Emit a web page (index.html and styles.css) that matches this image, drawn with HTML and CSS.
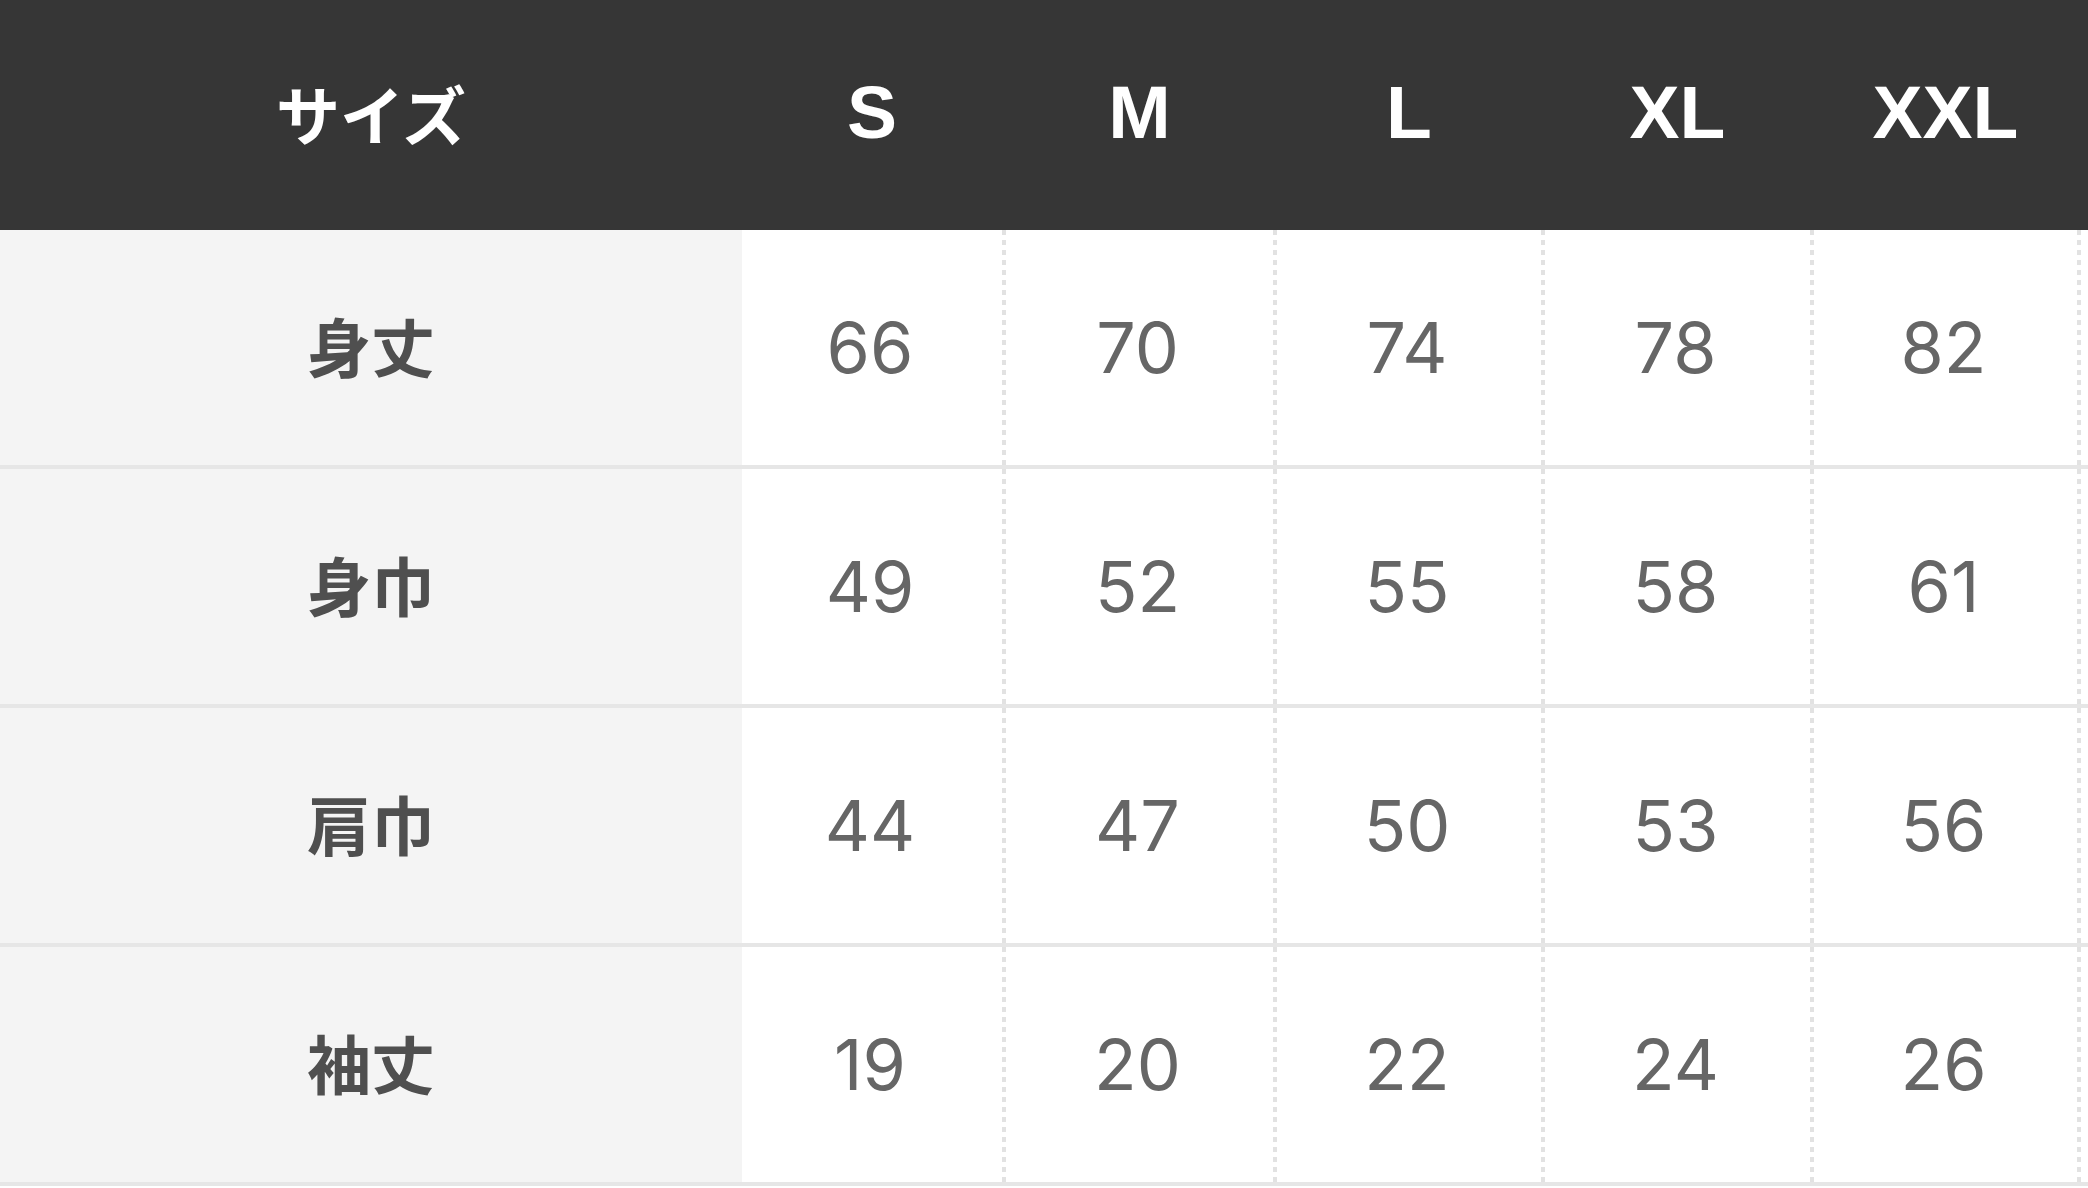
FILE: index.html
```html
<!DOCTYPE html>
<html lang="ja">
<head>
<meta charset="utf-8">
<title>サイズ表</title>
<link rel="stylesheet" href="styles.css">
</head>
<body>
<div class="size-table">
  <div class="row head">
    <div class="cell label">サイズ</div>
    <div class="cell size">S</div>
    <div class="cell size">M</div>
    <div class="cell size">L</div>
    <div class="cell size">XL</div>
    <div class="cell size">XXL</div>
    <div class="cell pad"></div>
  </div>
  <div class="row">
    <div class="cell label">身丈</div>
    <div class="cell num">66</div>
    <div class="cell num">70</div>
    <div class="cell num">74</div>
    <div class="cell num">78</div>
    <div class="cell num">82</div>
    <div class="cell pad"></div>
  </div>
  <div class="row">
    <div class="cell label">身巾</div>
    <div class="cell num">49</div>
    <div class="cell num">52</div>
    <div class="cell num">55</div>
    <div class="cell num">58</div>
    <div class="cell num">61</div>
    <div class="cell pad"></div>
  </div>
  <div class="row">
    <div class="cell label">肩巾</div>
    <div class="cell num">44</div>
    <div class="cell num">47</div>
    <div class="cell num">50</div>
    <div class="cell num">53</div>
    <div class="cell num">56</div>
    <div class="cell pad"></div>
  </div>
  <div class="row">
    <div class="cell label">袖丈</div>
    <div class="cell num">19</div>
    <div class="cell num">20</div>
    <div class="cell num">22</div>
    <div class="cell num">24</div>
    <div class="cell num">26</div>
    <div class="cell pad"></div>
  </div>
</div>
</body>
</html>
```

FILE: styles.css
```css
html, body {
  margin: 0;
  padding: 0;
  background: #ffffff;
}

body {
  font-family: "Noto Sans CJK JP", "Liberation Sans", sans-serif;
}

.size-table {
  width: 2088px;
}

.row {
  display: grid;
  grid-template-columns: 742px 264px 271px 268px 269px 267px 1fr;
  height: 239px;
  box-sizing: border-box;
  border-bottom: 4px solid #e6e6e6;
}

.cell {
  display: flex;
  align-items: center;
  justify-content: center;
}

.label {
  background: #f4f4f4;
  color: #4f4f4f;
  font-family: "Noto Sans CJK JP", sans-serif;
  font-weight: 700;
  font-size: 64px;
  line-height: 1;
  padding-bottom: 8px;
}

.num {
  color: #666666;
  font-family: "Inter", "Liberation Sans", sans-serif;
  font-weight: 400;
  font-size: 70px;
  line-height: 1;
  padding-right: 8px;
  background-image: repeating-linear-gradient(to bottom, #e2e2e2 0 5px, transparent 5px 10px);
  background-size: 4px 100%;
  background-position: right top;
  background-repeat: no-repeat;
}

.head {
  height: 230px;
  border-bottom: none;
  background: #363636;
}

.head .label {
  background: transparent;
  color: #ffffff;
  font-size: 64px;
  padding-bottom: 6px;
}

.head .size {
  color: #ffffff;
  font-family: "Liberation Sans", sans-serif;
  font-weight: 700;
  font-size: 75px;
  line-height: 1;
  padding-bottom: 6px;
  padding-right: 4px;
}
```
